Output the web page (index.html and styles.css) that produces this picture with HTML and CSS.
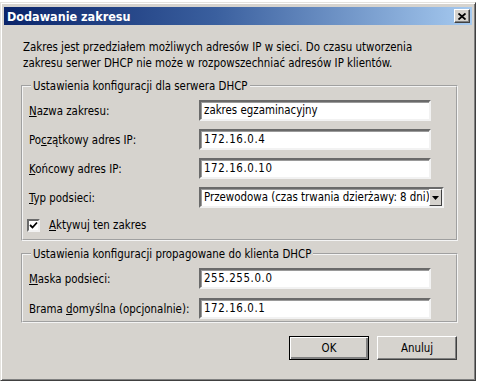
FILE: index.html
```html
<!DOCTYPE html>
<html lang="pl">
<head>
    <meta charset="UTF-8">
    <title>Dodawanie zakresu</title>
    <link rel="stylesheet" href="styles.css">
</head>
<body>
    <div class="window">
        <div class="titlebar">
            <span class="title">Dodawanie zakresu</span>
            <span class="close">
                <svg width="8" height="7" viewBox="0 0 8 7">
                    <path d="M0.5 0.5 L7.5 6.5 M7.5 0.5 L0.5 6.5" stroke="#000" stroke-width="1.8"/>
                </svg>
            </span>
        </div>

        <p class="intro">Zakres jest przedziałem możliwych adresów IP w sieci. Do czasu utworzenia<br>zakresu serwer DHCP nie może w rozpowszechniać adresów IP klientów.</p>

        <fieldset class="group group-server">
            <legend>Ustawienia konfiguracji dla serwera DHCP</legend>
            <div class="row">
                <span class="label"><u>N</u>azwa zakresu:</span>
                <div class="field">zakres egzaminacyjny</div>
            </div>
            <div class="row">
                <span class="label">Po<u>c</u>zątkowy adres IP:</span>
                <div class="field ip">172.16.0.4</div>
            </div>
            <div class="row">
                <span class="label"><u>K</u>ońcowy adres IP:</span>
                <div class="field ip">172.16.0.10</div>
            </div>
            <div class="row">
                <span class="label"><u>T</u>yp podsieci:</span>
                <div class="combo">
                    <span class="combo-text">Przewodowa (czas trwania dzierżawy: 8 dni)</span>
                    <span class="combo-btn">
                        <svg width="7" height="4" viewBox="0 0 7 4"><path d="M0 0 H7 L3.5 4 Z" fill="#000"/></svg>
                    </span>
                </div>
            </div>
            <div class="check-row">
                <span class="checkbox">
                    <svg width="9" height="9" viewBox="0 0 9 9"><path d="M1 4 L3.5 6.5 L8 1.5" fill="none" stroke="#000" stroke-width="1.8"/></svg>
                </span>
                <span><u>A</u>ktywuj ten zakres</span>
            </div>
        </fieldset>

        <fieldset class="group group-client">
            <legend>Ustawienia konfiguracji propagowane do klienta DHCP</legend>
            <div class="row">
                <span class="label"><u>M</u>aska podsieci:</span>
                <div class="field ip">255.255.0.0</div>
            </div>
            <div class="row">
                <span class="label">Brama <u>d</u>omyślna (opcjonalnie):</span>
                <div class="field ip">172.16.0.1</div>
            </div>
        </fieldset>

        <div class="buttons">
            <span class="btn btn-default">OK</span>
            <span class="btn">Anuluj</span>
        </div>
    </div>
</body>
</html>
```

FILE: styles.css
```css
:root {
    --face: #d6d3ce;
    --shadow: #808080;
    --dark: #404040;
    --text: #000;
}

* {
    margin: 0;
    padding: 0;
    box-sizing: border-box;
}

body {
    background: #fff;
    font-family: "DejaVu Sans Condensed", "Liberation Sans", sans-serif;
    font-size: 11.4px;
    color: var(--text);
}

.window {
    width: 476px;
    height: 379px;
    margin-top: 2px;
    padding: 3px;
    background: var(--face);
    border: 1px solid;
    border-color: #e4e2de var(--dark) var(--dark) #e4e2de;
    box-shadow: inset 1px 1px #fff, inset -1px -1px var(--shadow);
}

.titlebar {
    height: 18px;
    margin-top: 1px;
    display: flex;
    align-items: center;
    justify-content: space-between;
    padding: 0 2px 0 3px;
    background: linear-gradient(to right, #0a246a, #3a5f9e 45%, #a6caf0);
}

.title {
    color: #fff;
    font-weight: bold;
    font-size: 12.5px;
}

.close {
    width: 16px;
    height: 14px;
    display: flex;
    align-items: center;
    justify-content: center;
    background: var(--face);
    border: 1px solid;
    border-color: #fff var(--dark) var(--dark) #fff;
    box-shadow: inset -1px -1px var(--shadow);
}

.intro {
    margin: 14px 0 8px 19px;
    line-height: 16px;
}

.group {
    margin: 0 14px 0 17px;
    border: 2px groove #f4f4f4;
    padding: 7px 8px 7px 6px;
}

.group legend {
    padding: 0 2px;
    margin-left: 2px;
    line-height: 14px;
}

.group-server .row + .row {
    margin-top: 8px;
}

.group-client {
    margin-top: 6px;
    padding-bottom: 2px;
}

.group-client .row + .row {
    margin-top: 9px;
}

.row {
    display: flex;
    align-items: center;
    height: 21px;
}

.label {
    width: 170px;
    flex-shrink: 0;
}

.field {
    width: 232px;
    height: 21px;
    line-height: 17px;
    padding: 0 3px;
    background: #fff;
    border: 2px solid;
    border-color: #6a6a6a #f2f2f2 #f2f2f2 #6a6a6a;
    box-shadow: inset 1px 1px #9a9a9a;
    white-space: nowrap;
    overflow: hidden;
}

.field.ip {
    letter-spacing: 0.6px;
}

.combo {
    width: 245px;
    height: 21px;
    display: flex;
    background: #fff;
    border: 2px solid;
    border-color: #6a6a6a #f2f2f2 #f2f2f2 #6a6a6a;
    box-shadow: inset 1px 1px #9a9a9a;
}

.combo-text {
    flex: 1;
    line-height: 17px;
    padding-left: 3px;
    white-space: nowrap;
    overflow: hidden;
}

.combo-btn {
    width: 13px;
    flex-shrink: 0;
    display: flex;
    align-items: center;
    justify-content: center;
    background: var(--face);
    border: 1px solid;
    border-color: #fff var(--dark) var(--dark) #fff;
}

.check-row {
    display: flex;
    align-items: center;
    gap: 9px;
    margin: 10px 0 0 -2px;
    height: 14px;
}

.checkbox {
    width: 13px;
    height: 13px;
    display: flex;
    align-items: center;
    justify-content: center;
    background: #fff;
    border: 2px solid;
    border-color: #6a6a6a #f2f2f2 #f2f2f2 #6a6a6a;
}

.buttons {
    display: flex;
    justify-content: flex-end;
    gap: 8px;
    margin: 13px 15px 0 0;
}

.btn {
    width: 80px;
    height: 24px;
    display: flex;
    align-items: center;
    justify-content: center;
    background: var(--face);
    border: 1px solid;
    border-color: #fff var(--dark) var(--dark) #fff;
    box-shadow: inset -1px -1px var(--shadow);
}

.btn-default {
    border: 1px solid #000;
    box-shadow: inset 1px 1px #fff, inset -2px -2px var(--shadow);
}
```
